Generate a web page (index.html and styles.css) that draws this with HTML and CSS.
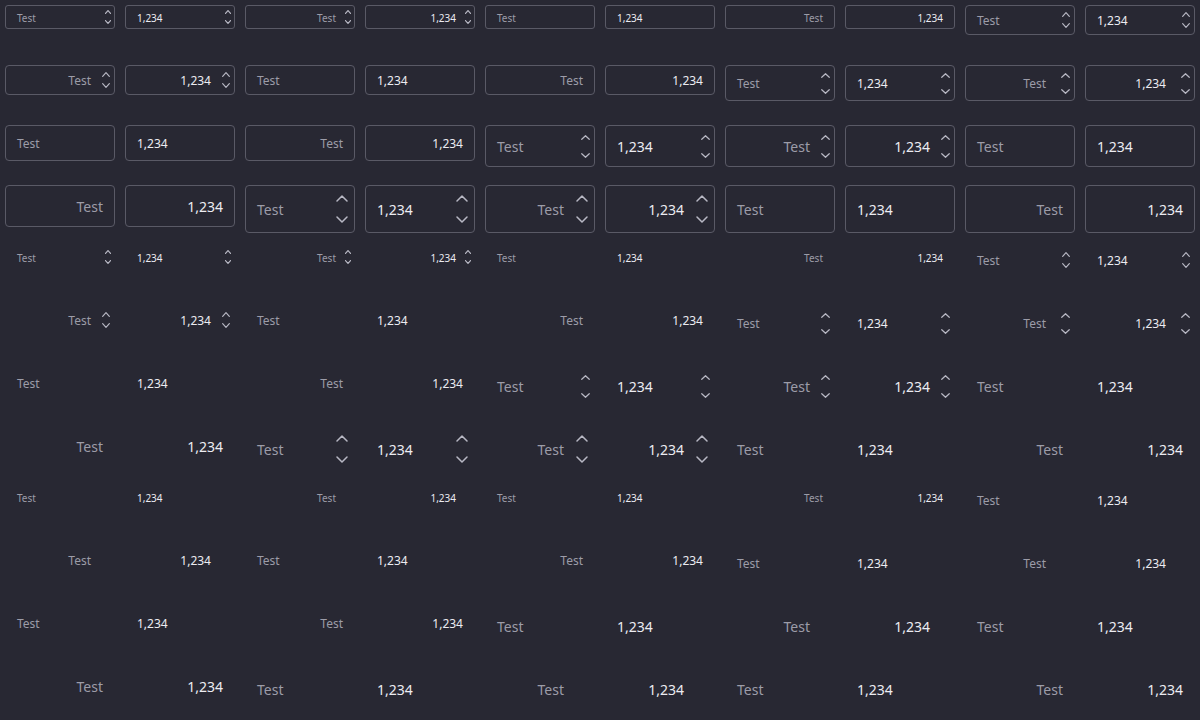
FILE: index.html
```html
<!DOCTYPE html>
<html>
<head>
<meta charset="utf-8">
<link rel="stylesheet" href="styles.css">
</head>
<body>
<svg class="defs"><symbol id="c" viewBox="0 0 12 7" preserveAspectRatio="none"><polyline points="1,6 6,1 11,6" fill="none" stroke="currentColor" vector-effect="non-scaling-stroke" stroke-linecap="round" stroke-linejoin="round"/></symbol></svg>

<div class="g g1">
<div class="f xs s"><span class="v">Test</span><span class="sp"><svg><use href="#c"/></svg><svg class="d"><use href="#c"/></svg></span></div>
<div class="f xs s n"><span class="v">1,234</span><span class="sp"><svg><use href="#c"/></svg><svg class="d"><use href="#c"/></svg></span></div>
<div class="f xs s r"><span class="v">Test</span><span class="sp"><svg><use href="#c"/></svg><svg class="d"><use href="#c"/></svg></span></div>
<div class="f xs s n r"><span class="v">1,234</span><span class="sp"><svg><use href="#c"/></svg><svg class="d"><use href="#c"/></svg></span></div>
<div class="f xs"><span class="v">Test</span></div>
<div class="f xs n"><span class="v">1,234</span></div>
<div class="f xs r"><span class="v">Test</span></div>
<div class="f xs n r"><span class="v">1,234</span></div>
<div class="f sm s"><span class="v">Test</span><span class="sp"><svg><use href="#c"/></svg><svg class="d"><use href="#c"/></svg></span></div>
<div class="f sm s n"><span class="v">1,234</span><span class="sp"><svg><use href="#c"/></svg><svg class="d"><use href="#c"/></svg></span></div>
<div class="f sm s r"><span class="v">Test</span><span class="sp"><svg><use href="#c"/></svg><svg class="d"><use href="#c"/></svg></span></div>
<div class="f sm s n r"><span class="v">1,234</span><span class="sp"><svg><use href="#c"/></svg><svg class="d"><use href="#c"/></svg></span></div>
<div class="f sm"><span class="v">Test</span></div>
<div class="f sm n"><span class="v">1,234</span></div>
<div class="f sm r"><span class="v">Test</span></div>
<div class="f sm n r"><span class="v">1,234</span></div>
<div class="f md s"><span class="v">Test</span><span class="sp"><svg><use href="#c"/></svg><svg class="d"><use href="#c"/></svg></span></div>
<div class="f md s n"><span class="v">1,234</span><span class="sp"><svg><use href="#c"/></svg><svg class="d"><use href="#c"/></svg></span></div>
<div class="f md s r"><span class="v">Test</span><span class="sp"><svg><use href="#c"/></svg><svg class="d"><use href="#c"/></svg></span></div>
<div class="f md s n r"><span class="v">1,234</span><span class="sp"><svg><use href="#c"/></svg><svg class="d"><use href="#c"/></svg></span></div>
<div class="f md"><span class="v">Test</span></div>
<div class="f md n"><span class="v">1,234</span></div>
<div class="f md r"><span class="v">Test</span></div>
<div class="f md n r"><span class="v">1,234</span></div>
<div class="f lg s"><span class="v">Test</span><span class="sp"><svg><use href="#c"/></svg><svg class="d"><use href="#c"/></svg></span></div>
<div class="f lg s n"><span class="v">1,234</span><span class="sp"><svg><use href="#c"/></svg><svg class="d"><use href="#c"/></svg></span></div>
<div class="f lg s r"><span class="v">Test</span><span class="sp"><svg><use href="#c"/></svg><svg class="d"><use href="#c"/></svg></span></div>
<div class="f lg s n r"><span class="v">1,234</span><span class="sp"><svg><use href="#c"/></svg><svg class="d"><use href="#c"/></svg></span></div>
<div class="f lg"><span class="v">Test</span></div>
<div class="f lg n"><span class="v">1,234</span></div>
<div class="f lg r"><span class="v">Test</span></div>
<div class="f lg n r"><span class="v">1,234</span></div>
<div class="f xl s"><span class="v">Test</span><span class="sp"><svg><use href="#c"/></svg><svg class="d"><use href="#c"/></svg></span></div>
<div class="f xl s n"><span class="v">1,234</span><span class="sp"><svg><use href="#c"/></svg><svg class="d"><use href="#c"/></svg></span></div>
<div class="f xl s r"><span class="v">Test</span><span class="sp"><svg><use href="#c"/></svg><svg class="d"><use href="#c"/></svg></span></div>
<div class="f xl s n r"><span class="v">1,234</span><span class="sp"><svg><use href="#c"/></svg><svg class="d"><use href="#c"/></svg></span></div>
<div class="f xl"><span class="v">Test</span></div>
<div class="f xl n"><span class="v">1,234</span></div>
<div class="f xl r"><span class="v">Test</span></div>
<div class="f xl n r"><span class="v">1,234</span></div>
</div>

<div class="g g2">
<div class="f xs s"><span class="v">Test</span><span class="sp"><svg><use href="#c"/></svg><svg class="d"><use href="#c"/></svg></span></div>
<div class="f xs s n"><span class="v">1,234</span><span class="sp"><svg><use href="#c"/></svg><svg class="d"><use href="#c"/></svg></span></div>
<div class="f xs s r"><span class="v">Test</span><span class="sp"><svg><use href="#c"/></svg><svg class="d"><use href="#c"/></svg></span></div>
<div class="f xs s n r"><span class="v">1,234</span><span class="sp"><svg><use href="#c"/></svg><svg class="d"><use href="#c"/></svg></span></div>
<div class="f xs"><span class="v">Test</span></div>
<div class="f xs n"><span class="v">1,234</span></div>
<div class="f xs r"><span class="v">Test</span></div>
<div class="f xs n r"><span class="v">1,234</span></div>
<div class="f sm s"><span class="v">Test</span><span class="sp"><svg><use href="#c"/></svg><svg class="d"><use href="#c"/></svg></span></div>
<div class="f sm s n"><span class="v">1,234</span><span class="sp"><svg><use href="#c"/></svg><svg class="d"><use href="#c"/></svg></span></div>
<div class="f sm s r"><span class="v">Test</span><span class="sp"><svg><use href="#c"/></svg><svg class="d"><use href="#c"/></svg></span></div>
<div class="f sm s n r"><span class="v">1,234</span><span class="sp"><svg><use href="#c"/></svg><svg class="d"><use href="#c"/></svg></span></div>
<div class="f sm"><span class="v">Test</span></div>
<div class="f sm n"><span class="v">1,234</span></div>
<div class="f sm r"><span class="v">Test</span></div>
<div class="f sm n r"><span class="v">1,234</span></div>
<div class="f md s"><span class="v">Test</span><span class="sp"><svg><use href="#c"/></svg><svg class="d"><use href="#c"/></svg></span></div>
<div class="f md s n"><span class="v">1,234</span><span class="sp"><svg><use href="#c"/></svg><svg class="d"><use href="#c"/></svg></span></div>
<div class="f md s r"><span class="v">Test</span><span class="sp"><svg><use href="#c"/></svg><svg class="d"><use href="#c"/></svg></span></div>
<div class="f md s n r"><span class="v">1,234</span><span class="sp"><svg><use href="#c"/></svg><svg class="d"><use href="#c"/></svg></span></div>
<div class="f md"><span class="v">Test</span></div>
<div class="f md n"><span class="v">1,234</span></div>
<div class="f md r"><span class="v">Test</span></div>
<div class="f md n r"><span class="v">1,234</span></div>
<div class="f lg s"><span class="v">Test</span><span class="sp"><svg><use href="#c"/></svg><svg class="d"><use href="#c"/></svg></span></div>
<div class="f lg s n"><span class="v">1,234</span><span class="sp"><svg><use href="#c"/></svg><svg class="d"><use href="#c"/></svg></span></div>
<div class="f lg s r"><span class="v">Test</span><span class="sp"><svg><use href="#c"/></svg><svg class="d"><use href="#c"/></svg></span></div>
<div class="f lg s n r"><span class="v">1,234</span><span class="sp"><svg><use href="#c"/></svg><svg class="d"><use href="#c"/></svg></span></div>
<div class="f lg"><span class="v">Test</span></div>
<div class="f lg n"><span class="v">1,234</span></div>
<div class="f lg r"><span class="v">Test</span></div>
<div class="f lg n r"><span class="v">1,234</span></div>
<div class="f xl s"><span class="v">Test</span><span class="sp"><svg><use href="#c"/></svg><svg class="d"><use href="#c"/></svg></span></div>
<div class="f xl s n"><span class="v">1,234</span><span class="sp"><svg><use href="#c"/></svg><svg class="d"><use href="#c"/></svg></span></div>
<div class="f xl s r"><span class="v">Test</span><span class="sp"><svg><use href="#c"/></svg><svg class="d"><use href="#c"/></svg></span></div>
<div class="f xl s n r"><span class="v">1,234</span><span class="sp"><svg><use href="#c"/></svg><svg class="d"><use href="#c"/></svg></span></div>
<div class="f xl"><span class="v">Test</span></div>
<div class="f xl n"><span class="v">1,234</span></div>
<div class="f xl r"><span class="v">Test</span></div>
<div class="f xl n r"><span class="v">1,234</span></div>
</div>

<div class="g g3">
<div class="f xs s"><span class="v">Test</span><span class="sp"></span></div>
<div class="f xs s n"><span class="v">1,234</span><span class="sp"></span></div>
<div class="f xs s r"><span class="v">Test</span><span class="sp"></span></div>
<div class="f xs s n r"><span class="v">1,234</span><span class="sp"></span></div>
<div class="f xs"><span class="v">Test</span></div>
<div class="f xs n"><span class="v">1,234</span></div>
<div class="f xs r"><span class="v">Test</span></div>
<div class="f xs n r"><span class="v">1,234</span></div>
<div class="f sm s"><span class="v">Test</span><span class="sp"></span></div>
<div class="f sm s n"><span class="v">1,234</span><span class="sp"></span></div>
<div class="f sm s r"><span class="v">Test</span><span class="sp"></span></div>
<div class="f sm s n r"><span class="v">1,234</span><span class="sp"></span></div>
<div class="f sm"><span class="v">Test</span></div>
<div class="f sm n"><span class="v">1,234</span></div>
<div class="f sm r"><span class="v">Test</span></div>
<div class="f sm n r"><span class="v">1,234</span></div>
<div class="f md s"><span class="v">Test</span><span class="sp"></span></div>
<div class="f md s n"><span class="v">1,234</span><span class="sp"></span></div>
<div class="f md s r"><span class="v">Test</span><span class="sp"></span></div>
<div class="f md s n r"><span class="v">1,234</span><span class="sp"></span></div>
<div class="f md"><span class="v">Test</span></div>
<div class="f md n"><span class="v">1,234</span></div>
<div class="f md r"><span class="v">Test</span></div>
<div class="f md n r"><span class="v">1,234</span></div>
<div class="f lg s"><span class="v">Test</span><span class="sp"></span></div>
<div class="f lg s n"><span class="v">1,234</span><span class="sp"></span></div>
<div class="f lg s r"><span class="v">Test</span><span class="sp"></span></div>
<div class="f lg s n r"><span class="v">1,234</span><span class="sp"></span></div>
<div class="f lg"><span class="v">Test</span></div>
<div class="f lg n"><span class="v">1,234</span></div>
<div class="f lg r"><span class="v">Test</span></div>
<div class="f lg n r"><span class="v">1,234</span></div>
<div class="f xl s"><span class="v">Test</span><span class="sp"></span></div>
<div class="f xl s n"><span class="v">1,234</span><span class="sp"></span></div>
<div class="f xl s r"><span class="v">Test</span><span class="sp"></span></div>
<div class="f xl s n r"><span class="v">1,234</span><span class="sp"></span></div>
<div class="f xl"><span class="v">Test</span></div>
<div class="f xl n"><span class="v">1,234</span></div>
<div class="f xl r"><span class="v">Test</span></div>
<div class="f xl n r"><span class="v">1,234</span></div>
</div>
</body>
</html>
```

FILE: styles.css
```css
html, body {
  margin: 0;
  background: #282833;
}
body {
  font-family: "Noto Sans", "Open Sans", sans-serif;
  width: 1200px;
  height: 720px;
  overflow: hidden;
}
.defs {
  display: block;
  width: 0;
  height: 0;
  overflow: hidden;
}
.g {
  display: grid;
  grid-template-columns: repeat(10, 110px);
  grid-auto-rows: 50px;
  gap: 10px;
  padding: 5px;
  align-items: start;
}
.f {
  display: flex;
  align-items: center;
  box-sizing: border-box;
  border: 1px solid transparent;
  border-radius: 4px;
  padding: 0 11px;
  color: #9c9ca8;
}
.g1 .f {
  border-color: #5a5a66;
}
.f.s {
  padding-right: 0;
}
.f.n {
  color: #ececf2;
}
.v {
  flex: 1;
  white-space: nowrap;
  line-height: 1;
  padding-top: 2px;
}
.f.r .v {
  text-align: right;
}
.sp {
  display: flex;
  flex-direction: column;
  justify-content: space-between;
  color: #b8b8c4;
  flex: none;
}
.sp svg {
  display: block;
  width: 100%;
  stroke-width: 1.2px;
}
.sp svg.d {
  transform: scaleY(-1);
}
.g3 .sp {
  visibility: hidden;
}

.xs { height: 24px; font-size: 10px; border-radius: 3px; }
.sm { height: 30px; font-size: 12px; }
.md { height: 36px; font-size: 12px; }
.lg { height: 42px; font-size: 14px; }
.xl { height: 48px; font-size: 14px; }

.xs .sp { width: 6px; height: 14px; margin: 0 3px 0 9px; }
.xs .sp svg { height: 4px; }
.sm .sp { width: 8px; height: 16px; margin: 0 4px 0 11px; }
.sm .sp svg { height: 5px; }
.md .sp { width: 9px; height: 21px; margin: 0 4px 0 15px; }
.md .sp svg { height: 5px; }
.lg .sp { width: 9px; height: 23px; margin: 0 4px 0 11px; }
.lg .sp svg { height: 5px; }
.xl .sp { width: 12px; height: 28px; margin: 0 6px 0 12px; }
.xl .sp svg { height: 7px; stroke-width: 1.5px; }
```
